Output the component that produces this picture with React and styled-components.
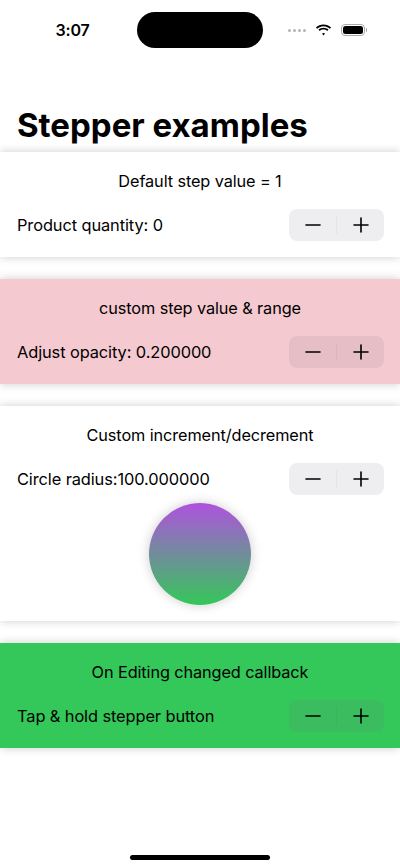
import styled, { createGlobalStyle } from "styled-components";

const GlobalStyle = createGlobalStyle`
  html, body {
    margin: 0;
    padding: 0;
    background: #ffffff;
  }
  body {
    font-family: Inter, "Noto Sans", "Liberation Sans", sans-serif;
    color: #000;
    -webkit-font-smoothing: antialiased;
  }
`;

// STATUS BAR
const Screen = styled.div`
  width: 400px;
  height: 868px;
  position: relative;
  overflow: hidden;
  background: #fff;
`;

const StatusBar = styled.div`
  display: grid;
  grid-template-columns: 1fr 126px 1fr;
  align-items: center;
  padding-top: 12px;
  height: 36px;
`;

const Time = styled.div`
  text-align: center;
  padding-left: 8px;
  font-size: 16px;
  font-weight: 600;
  letter-spacing: -0.2px;
`;

const Island = styled.div`
  height: 36px;
  border-radius: 18px;
  background: #000;
`;

const StatusIcons = styled.div`
  display: flex;
  align-items: center;
  justify-content: center;
  gap: 9px;
  padding-right: 8px;
`;

const Dots = styled.div`
  display: flex;
  gap: 2px;
`;

const Dot = styled.span`
  width: 3px;
  height: 3px;
  border-radius: 50%;
  background: #b5b5b5;
`;

const Battery = styled.div`
  display: flex;
  align-items: center;
  gap: 1px;
`;

const BatteryBody = styled.div`
  width: 24px;
  height: 12px;
  border-radius: 4px;
  border: 1px solid #aaa;
  padding: 1px;
  box-sizing: border-box;
  display: flex;
`;

const BatteryFill = styled.div`
  flex: 1;
  border-radius: 2.5px;
  background: #000;
`;

const BatteryCap = styled.div`
  width: 1.5px;
  height: 4px;
  border-radius: 0 1px 1px 0;
  background: #aaa;
`;

// CONTENT
const Title = styled.h1`
  margin: 57px 0 6px;
  padding: 0 17px;
  font-size: 33px;
  line-height: 41px;
  font-weight: 700;
  letter-spacing: 0;
`;

const List = styled.div`
  display: flex;
  flex-direction: column;
  gap: 22px;
`;

const Section = styled.section`
  background: ${(p) => p.$bg || "#fff"};
  box-shadow: 0 0 9px rgba(0, 0, 0, 0.2);
  padding: 18px 17px 16px;
  display: flex;
  flex-direction: column;
`;

const Header = styled.div`
  text-align: center;
  font-size: 16.3px;
  line-height: 22px;
  letter-spacing: -0.1px;
  margin-bottom: 17px;
`;

const Row = styled.div`
  display: flex;
  align-items: center;
  justify-content: space-between;
  height: 32px;
`;

const Label = styled.div`
  font-size: 16.4px;
  line-height: 22px;
  letter-spacing: -0.1px;
`;

const Stepper = styled.div`
  width: 95px;
  height: 32px;
  border-radius: 8px;
  background: rgba(118, 118, 128, 0.12);
  display: flex;
  align-items: center;
  margin-right: -1px;
`;

const StepButton = styled.button`
  flex: 1;
  height: 100%;
  border: none;
  background: transparent;
  padding: 0;
  display: flex;
  align-items: center;
  justify-content: center;
  color: #000;
`;

const Divider = styled.span`
  width: 1px;
  height: 18px;
  background: rgba(60, 60, 67, 0.06);
`;

const Circle = styled.div`
  width: 102px;
  height: 102px;
  border-radius: 50%;
  margin: 8px auto 0;
  background: linear-gradient(#af52de, #34c759);
  box-shadow: 0 0 12px rgba(0, 0, 0, 0.2);
`;

const HomeIndicator = styled.div`
  position: absolute;
  bottom: 8px;
  left: 130px;
  width: 140px;
  height: 5px;
  border-radius: 3px;
  background: #000;
`;

const Minus = () => (
  <svg width="16" height="16" viewBox="0 0 16 16">
    <path d="M1 8h14" stroke="#000" strokeWidth="1.6" strokeLinecap="round" />
  </svg>
);

const Plus = () => (
  <svg width="16" height="16" viewBox="0 0 16 16">
    <path d="M1 8h14M8 1v14" stroke="#000" strokeWidth="1.6" strokeLinecap="round" />
  </svg>
);

const StepperControl = () => (
  <Stepper>
    <StepButton aria-label="decrement">
      <Minus />
    </StepButton>
    <Divider />
    <StepButton aria-label="increment">
      <Plus />
    </StepButton>
  </Stepper>
);

const Wifi = () => (
  <svg width="17" height="12" viewBox="0 0 17 12">
    <path d="M8.5 2.2c2.4 0 4.6.9 6.3 2.5l1.3-1.3C14.1 1.5 11.4.4 8.5.4S2.9 1.5.9 3.4l1.3 1.3C3.9 3.1 6.1 2.2 8.5 2.2z" fill="#000" />
    <path d="M8.5 5.6c1.4 0 2.7.5 3.7 1.4l1.3-1.3c-1.3-1.2-3.1-1.9-5-1.9s-3.7.7-5 1.9L4.8 7c1-.9 2.3-1.4 3.700-1.4z" fill="#000" />
    <path d="M8.5 8.9c.6 0 1.1.2 1.5.6l-1.5 1.9L7 9.5c.4-.4.9-.6 1.5-.6z" fill="#000" />
  </svg>
);

const examples = [
  { header: "Default step value = 1", label: "Product quantity: 0" },
  { header: "custom step value & range", label: "Adjust opacity: 0.200000", bg: "#f5c9d0" },
  { header: "Custom increment/decrement", label: "Circle radius:100.000000", circle: true },
  { header: "On Editing changed callback", label: "Tap & hold stepper button", bg: "#34c759" },
];

export default function App() {
  return (
    <Screen>
      <GlobalStyle />
      <StatusBar>
        <Time>3:07</Time>
        <Island />
        <StatusIcons>
          <Dots>
            <Dot />
            <Dot />
            <Dot />
            <Dot />
          </Dots>
          <Wifi />
          <Battery>
            <BatteryBody>
              <BatteryFill />
            </BatteryBody>
            <BatteryCap />
          </Battery>
        </StatusIcons>
      </StatusBar>
      <Title>Stepper examples</Title>
      <List>
        {examples.map((ex) => (
          <Section key={ex.header} $bg={ex.bg}>
            <Header>{ex.header}</Header>
            <Row>
              <Label>{ex.label}</Label>
              <StepperControl />
            </Row>
            {ex.circle && <Circle />}
          </Section>
        ))}
      </List>
      <HomeIndicator />
    </Screen>
  );
}
